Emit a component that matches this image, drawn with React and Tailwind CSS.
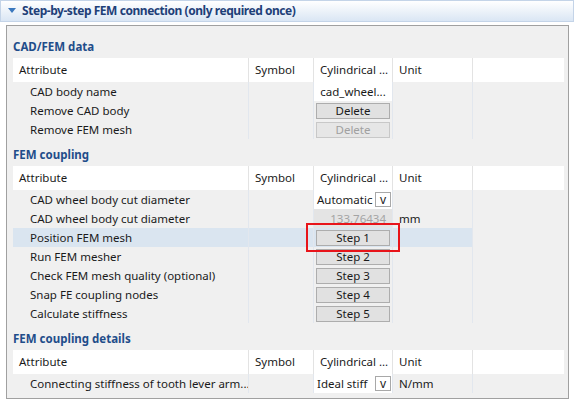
import React from "react";

const F = { fontFamily: '"Noto Sans", "Open Sans", Arial, sans-serif' };

function HeaderRow() {
  return (
    <div className="flex h-[24px] bg-white text-[11.5px] text-[#1a1a1a] items-stretch">
      <div className="w-[236px] border-r border-[#e3e3e3] pl-[6px] flex items-center">Attribute</div>
      <div className="w-[65px] border-r border-[#e3e3e3] pl-[6px] flex items-center">Symbol</div>
      <div className="w-[79px] border-r border-[#e3e3e3] pl-[6px] flex items-center whitespace-nowrap">Cylindrical ...</div>
      <div className="w-[80px] border-r border-[#e3e3e3] pl-[6px] flex items-center">Unit</div>
      <div className="flex-1" />
    </div>
  );
}

function Btn({ label, disabled }) {
  return (
    <div
      className={
        "mx-[2px] h-[16px] flex items-center justify-center text-[11.5px] border " +
        (disabled
          ? "bg-[#e6e6e6] border-[#c8c8c8] text-[#a0a0a0]"
          : "bg-[#e1e1e1] border-[#adadad] text-[#1a1a1a]")
      }
    >
      {label}
    </div>
  );
}

function Row({ label, cell, unit, highlight }) {
  return (
    <div className={"flex h-[19px] text-[11.5px] text-[#1a1a1a] items-stretch w-[460px] " + (highlight ? "bg-[#dae5f0]" : "")}>
      <div className="w-[236px] border-r border-[#e2e7ee] pl-[17px] flex items-center whitespace-nowrap overflow-hidden">{label}</div>
      <div className="w-[65px] border-r border-[#e2e7ee]" />
      <div className="w-[79px] border-r border-[#e2e7ee] flex flex-col justify-center">{cell}</div>
      <div className="w-[80px] border-r border-[#e2e7ee] pl-[6px] flex items-center">{unit}</div>
    </div>
  );
}

function Combo({ text }) {
  return (
    <div className="h-[19px] bg-white flex items-center relative overflow-hidden">
      <span className="pl-[3px] whitespace-nowrap">{text}</span>
      <div className="absolute right-[1px] top-[2px] w-[16px] h-[15px] bg-white border border-[#a8a8a8] flex items-center justify-center text-[12px] leading-none">v</div>
    </div>
  );
}

function Title({ children }) {
  return (
    <div className="h-[27px] flex items-end pb-[1px]">
      <div className="leading-[20px] text-[11.5px] font-bold text-[#1f4d8a]">{children}</div>
    </div>
  );
}

export default function App() {
  return (
    <div className="w-[576px] h-[406px] bg-white overflow-hidden relative" style={F}>
      <div className="h-[22px] w-[574px] border border-[#c4d4e8] bg-gradient-to-b from-white to-[#dae6f4] flex items-center">
        <svg width="8" height="6" viewBox="0 0 8 6" className="ml-[7px]">
          <path d="M0 0 L8 0 L4 5 Z" fill="#3b78be" />
        </svg>
        <span className="ml-[6px] text-[12px] tracking-[-0.45px] font-bold text-[#1e4078] whitespace-nowrap">
          Step-by-step FEM connection (only required once)
        </span>
      </div>
      <div className="ml-[6px] mt-[3px] w-[563px] h-[374px] border border-[#a0a0a0] bg-[#f0f0f0] pl-[6px] pr-[4px] pt-[5px]">
        <Title>CAD/FEM data</Title>
        <HeaderRow />
        <Row
          label="CAD body name"
          cell={<div className="h-[19px] bg-white flex items-center justify-center whitespace-nowrap">cad_wheel...</div>}
        />
        <Row label="Remove CAD body" cell={<Btn label="Delete" />} />
        <Row label="Remove FEM mesh" cell={<Btn label="Delete" disabled />} />

        <Title>FEM coupling</Title>
        <HeaderRow />
        <Row label="CAD wheel body cut diameter" cell={<Combo text="Automatic" />} />
        <Row
          label="CAD wheel body cut diameter"
          cell={<div className="h-[19px] bg-[#e4e4e4] flex items-center justify-end pr-[6px] text-[#a3a3a3]">133,76434</div>}
          unit="mm"
        />
        <div className="relative">
          <Row label="Position FEM mesh" cell={<Btn label="Step 1" />} highlight />
          <div className="absolute left-[293px] top-[-5px] w-[94px] h-[29px] border-2 border-[#e8141a]" />
        </div>
        <Row label="Run FEM mesher" cell={<Btn label="Step 2" />} />
        <Row label="Check FEM mesh quality (optional)" cell={<Btn label="Step 3" />} />
        <Row label="Snap FE coupling nodes" cell={<Btn label="Step 4" />} />
        <Row label="Calculate stiffness" cell={<Btn label="Step 5" />} />

        <Title>FEM coupling details</Title>
        <HeaderRow />
        <Row label="Connecting stiffness of tooth lever arm..." cell={<Combo text="Ideal stiff" />} unit="N/mm" />
      </div>
    </div>
  );
}
